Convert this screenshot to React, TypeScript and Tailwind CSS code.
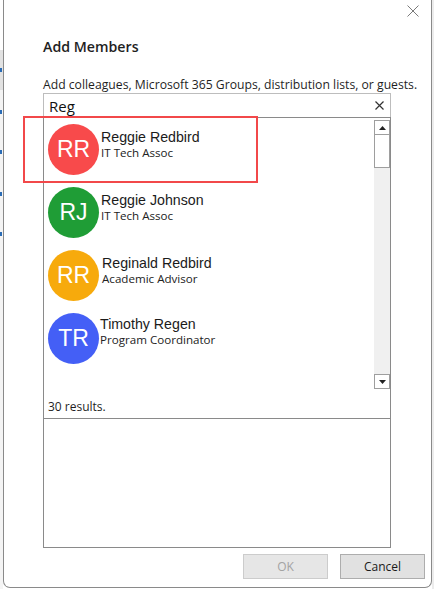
import React from 'react';

interface Member {
  initials: string;
  name: string;
  title: string;
  color: string;
  nameClass: string;
}

const members: Member[] = [
  { initials: 'RR', name: 'Reggie Redbird', title: 'IT Tech Assoc', color: 'bg-[#f84a4b]', nameClass: 'pt-[11px] pl-[2px]' },
  { initials: 'RJ', name: 'Reggie Johnson', title: 'IT Tech Assoc', color: 'bg-[#1f9d36]', nameClass: 'pt-[11px] pl-[2px]' },
  { initials: 'RR', name: 'Reginald Redbird', title: 'Academic Advisor', color: 'bg-[#f7aa0c]', nameClass: 'pt-[11px] pl-[3px]' },
  { initials: 'TR', name: 'Timothy Regen', title: 'Program Coordinator', color: 'bg-[#445ff6]', nameClass: 'pt-[9px] pl-[1px]' },
];

const ui = { fontFamily: '"Open Sans", "Noto Sans", sans-serif' };
const arial = { fontFamily: '"Liberation Sans", Arial, sans-serif' };

const MemberRow: React.FC<{ m: Member }> = ({ m }) => (
  <div className="h-[63px] flex items-start pl-[4px]">
    <div
      className={`mt-[6px] w-[51px] h-[51px] rounded-full shrink-0 flex items-center justify-center text-white text-[23px] ${m.color}`}
      style={arial}
    >
      {m.initials}
    </div>
    <div className={`flex flex-col ${m.nameClass}`}>
      <span className="text-[14.2px] leading-[17px] text-[#1b1b1b]" style={arial}>{m.name}</span>
      <span className="text-[11.6px] leading-[14px] text-[#222]" style={ui}>{m.title}</span>
    </div>
  </div>
);

const Scrollbar: React.FC = () => (
  <div className="w-[16px] flex flex-col pt-[2px] pb-[1px]">
    <div className="h-[15px] border border-[#9e9e9e] bg-white flex items-center justify-center">
      <svg width="7" height="4" viewBox="0 0 7 4"><path d="M0 4 L3.5 0 L7 4 Z" fill="#222" /></svg>
    </div>
    <div className="h-[33px] border border-t-0 border-[#9e9e9e] bg-white" />
    <div className="flex-1 bg-[#f0f0f0]" />
    <div className="h-[15px] border border-[#9e9e9e] bg-white flex items-center justify-center">
      <svg width="7" height="4" viewBox="0 0 7 4"><path d="M0 0 L3.5 4 L7 0 Z" fill="#222" /></svg>
    </div>
  </div>
);

export default function App() {
  return (
    <div className="relative w-[434px] h-[589px] flex bg-white overflow-hidden" style={ui}>
      {/* window behind the dialog */}
      <div className="w-[3px] h-full bg-[#f4f4f4] flex flex-col">
        <div className="h-[50px] bg-white" />
        <div className="h-[40px] bg-[#e2e2e2] flex items-center"><div className="w-[2px] h-[4px] bg-[#2a6bb5]" /></div>
        <div className="h-[20px]" />
        <div className="w-[2px] h-[4px] bg-[#2a6bb5]" />
        <div className="h-[36px]" />
        <div className="w-[2px] h-[4px] bg-[#2a6bb5]" />
        <div className="h-[38px]" />
        <div className="w-[2px] h-[4px] bg-[#2a6bb5]" />
        <div className="h-[36px]" />
        <div className="w-[2px] h-[4px] bg-[#2a6bb5]" />
      </div>

      <div className="w-[429px] h-[588px] border-l border-r border-b border-[#8a8a8a] rounded-b-[7px] bg-white flex flex-col">
        <div className="h-[30px] flex justify-end items-start pt-[5px] pr-[12px]">
          <svg width="12" height="12" viewBox="0 0 12 12">
            <path d="M0.5 0.5 L11.5 11.5 M11.5 0.5 L0.5 11.5" stroke="#7a7a7a" strokeWidth="1" />
          </svg>
        </div>

        <div className="pl-[39px] pr-[40px] flex flex-col">
          <div className="mt-[7px] h-[20px] leading-[20px] text-[14.2px] font-semibold text-[#1f1f1f]">Add Members</div>
          <div className="mt-[20px] h-[16px] leading-[16px] text-[12.2px] text-[#1f1f1f] whitespace-nowrap">
            Add colleagues, Microsoft 365 Groups, distribution lists, or guests.
          </div>

          <div className="h-[24px] border border-b-0 border-[#bdbdbd] flex items-center justify-between pl-[5px] pr-[6px]">
            <span className="text-[15px] leading-[20px] text-[#111]">Reg</span>
            <svg width="9" height="9" viewBox="0 0 9 9">
              <path d="M0.5 0.5 L8.5 8.5 M8.5 0.5 L0.5 8.5" stroke="#333" strokeWidth="1.2" />
            </svg>
          </div>

          <div className="h-[431px] border border-[#8a8a8a] flex flex-col">
            <div className="h-[301px] border-b border-[#8a8a8a] flex flex-col">
              <div className="h-[272px] flex">
                <div className="flex-1 flex flex-col overflow-hidden">
                  {members.map((m) => (
                    <MemberRow key={m.name} m={m} />
                  ))}
                </div>
                <Scrollbar />
              </div>
              <div className="pl-[4px] pt-[9px] text-[12px] leading-[16px] text-[#1f1f1f]">30 results.</div>
            </div>
            <div className="flex-1" />
          </div>
        </div>

        <div className="mt-[6px] flex justify-end gap-[12px] pr-[6px]">
          <button className="w-[85px] h-[25px] bg-[#e6e6e6] border border-[#cccccc] text-[12px] text-[#a3a3a3]">OK</button>
          <button className="w-[85px] h-[25px] bg-[#e1e1e1] border border-[#adadad] text-[12px] text-[#1a1a1a]">Cancel</button>
        </div>
      </div>

      <div className="w-[2px] h-full bg-[#ececec]" />

      {/* red highlight annotation */}
      <div className="absolute left-[23px] top-[116px] w-[235px] h-[67px] border-2 border-[#f2484a]" />
    </div>
  );
}
